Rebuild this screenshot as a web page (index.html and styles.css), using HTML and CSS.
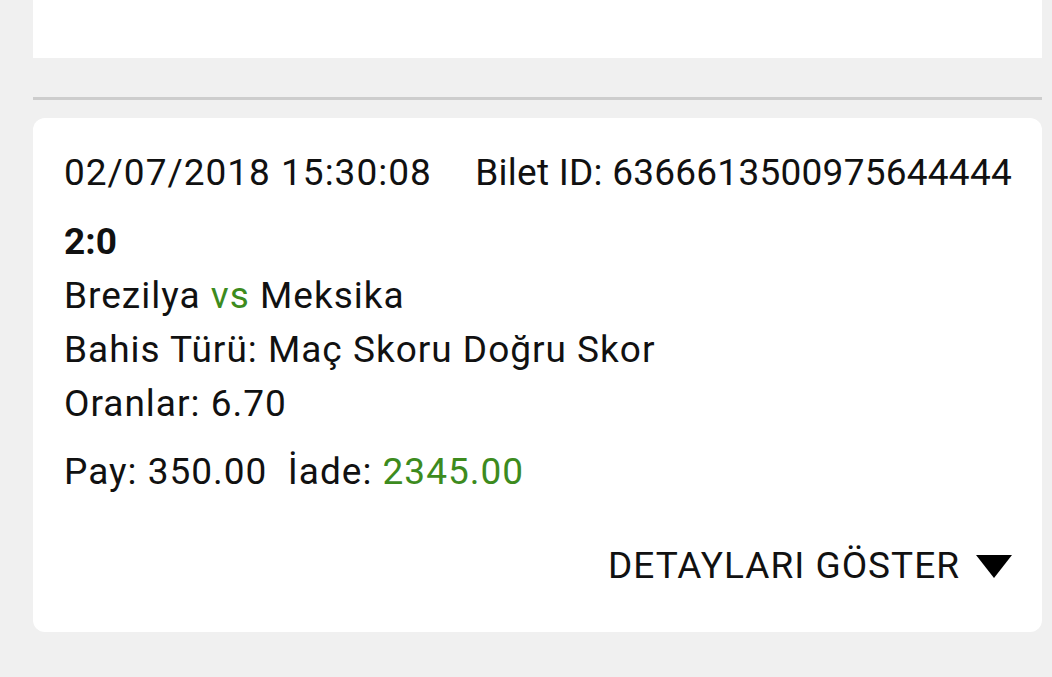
FILE: index.html
```html
<!DOCTYPE html>
<html lang="tr">
<head>
<meta charset="utf-8">
<link rel="stylesheet" href="styles.css">
</head>
<body>
<div class="page">
  <div class="card card-top"></div>
  <div class="divider"></div>
  <div class="card ticket">
    <div class="ticket-head">
      <span>02/07/2018 15:30:08</span>
      <span class="ticket-id">Bilet ID: 6366613500975644444</span>
    </div>
    <div class="score">2:0</div>
    <div class="line">Brezilya <span class="green">vs</span> Meksika</div>
    <div class="line">Bahis Türü: Maç Skoru Doğru Skor</div>
    <div class="line">Oranlar: 6.70</div>
    <div class="line pay">Pay: 350.00&nbsp;&nbsp;İade: <span class="green">2345.00</span></div>
    <div class="details">
      <span>DETAYLARI GÖSTER</span>
      <svg class="tri" width="36" height="23" viewBox="0 0 36 23"><polygon points="0,0 36,0 18,23" fill="#000"/></svg>
    </div>
  </div>
</div>
</body>
</html>
```
FILE: styles.css
```css
html, body {
  margin: 0;
  padding: 0;
  background: #f0f0f0;
}
body {
  font-family: Roboto, "Noto Sans", sans-serif;
  color: #111;
}
.page {
  padding: 0 10px 0 33px;
  display: flex;
  flex-direction: column;
}
.card {
  background: #fff;
}
.card-top {
  height: 58px;
}
.divider {
  margin-top: 39px;
  height: 3px;
  background: #cdcdcd;
}
.ticket {
  margin-top: 18px;
  border-radius: 12px;
  padding: 28px 30px 0 31px;
  height: 514px;
  box-sizing: border-box;
  font-size: 37px;
  line-height: 54px;
  letter-spacing: 1px;
}
.ticket-head {
  display: flex;
  justify-content: space-between;
}
.ticket-id {
  letter-spacing: 0.25px;
}
.score {
  font-weight: 700;
  margin-top: 15px;
  letter-spacing: 0;
}
.pay {
  margin-top: 14px;
}
.green {
  color: #3d8b1e;
}
.details {
  margin-top: 40px;
  display: flex;
  justify-content: flex-end;
  align-items: center;
  gap: 16px;
}
.tri {
  display: block;
}
```
